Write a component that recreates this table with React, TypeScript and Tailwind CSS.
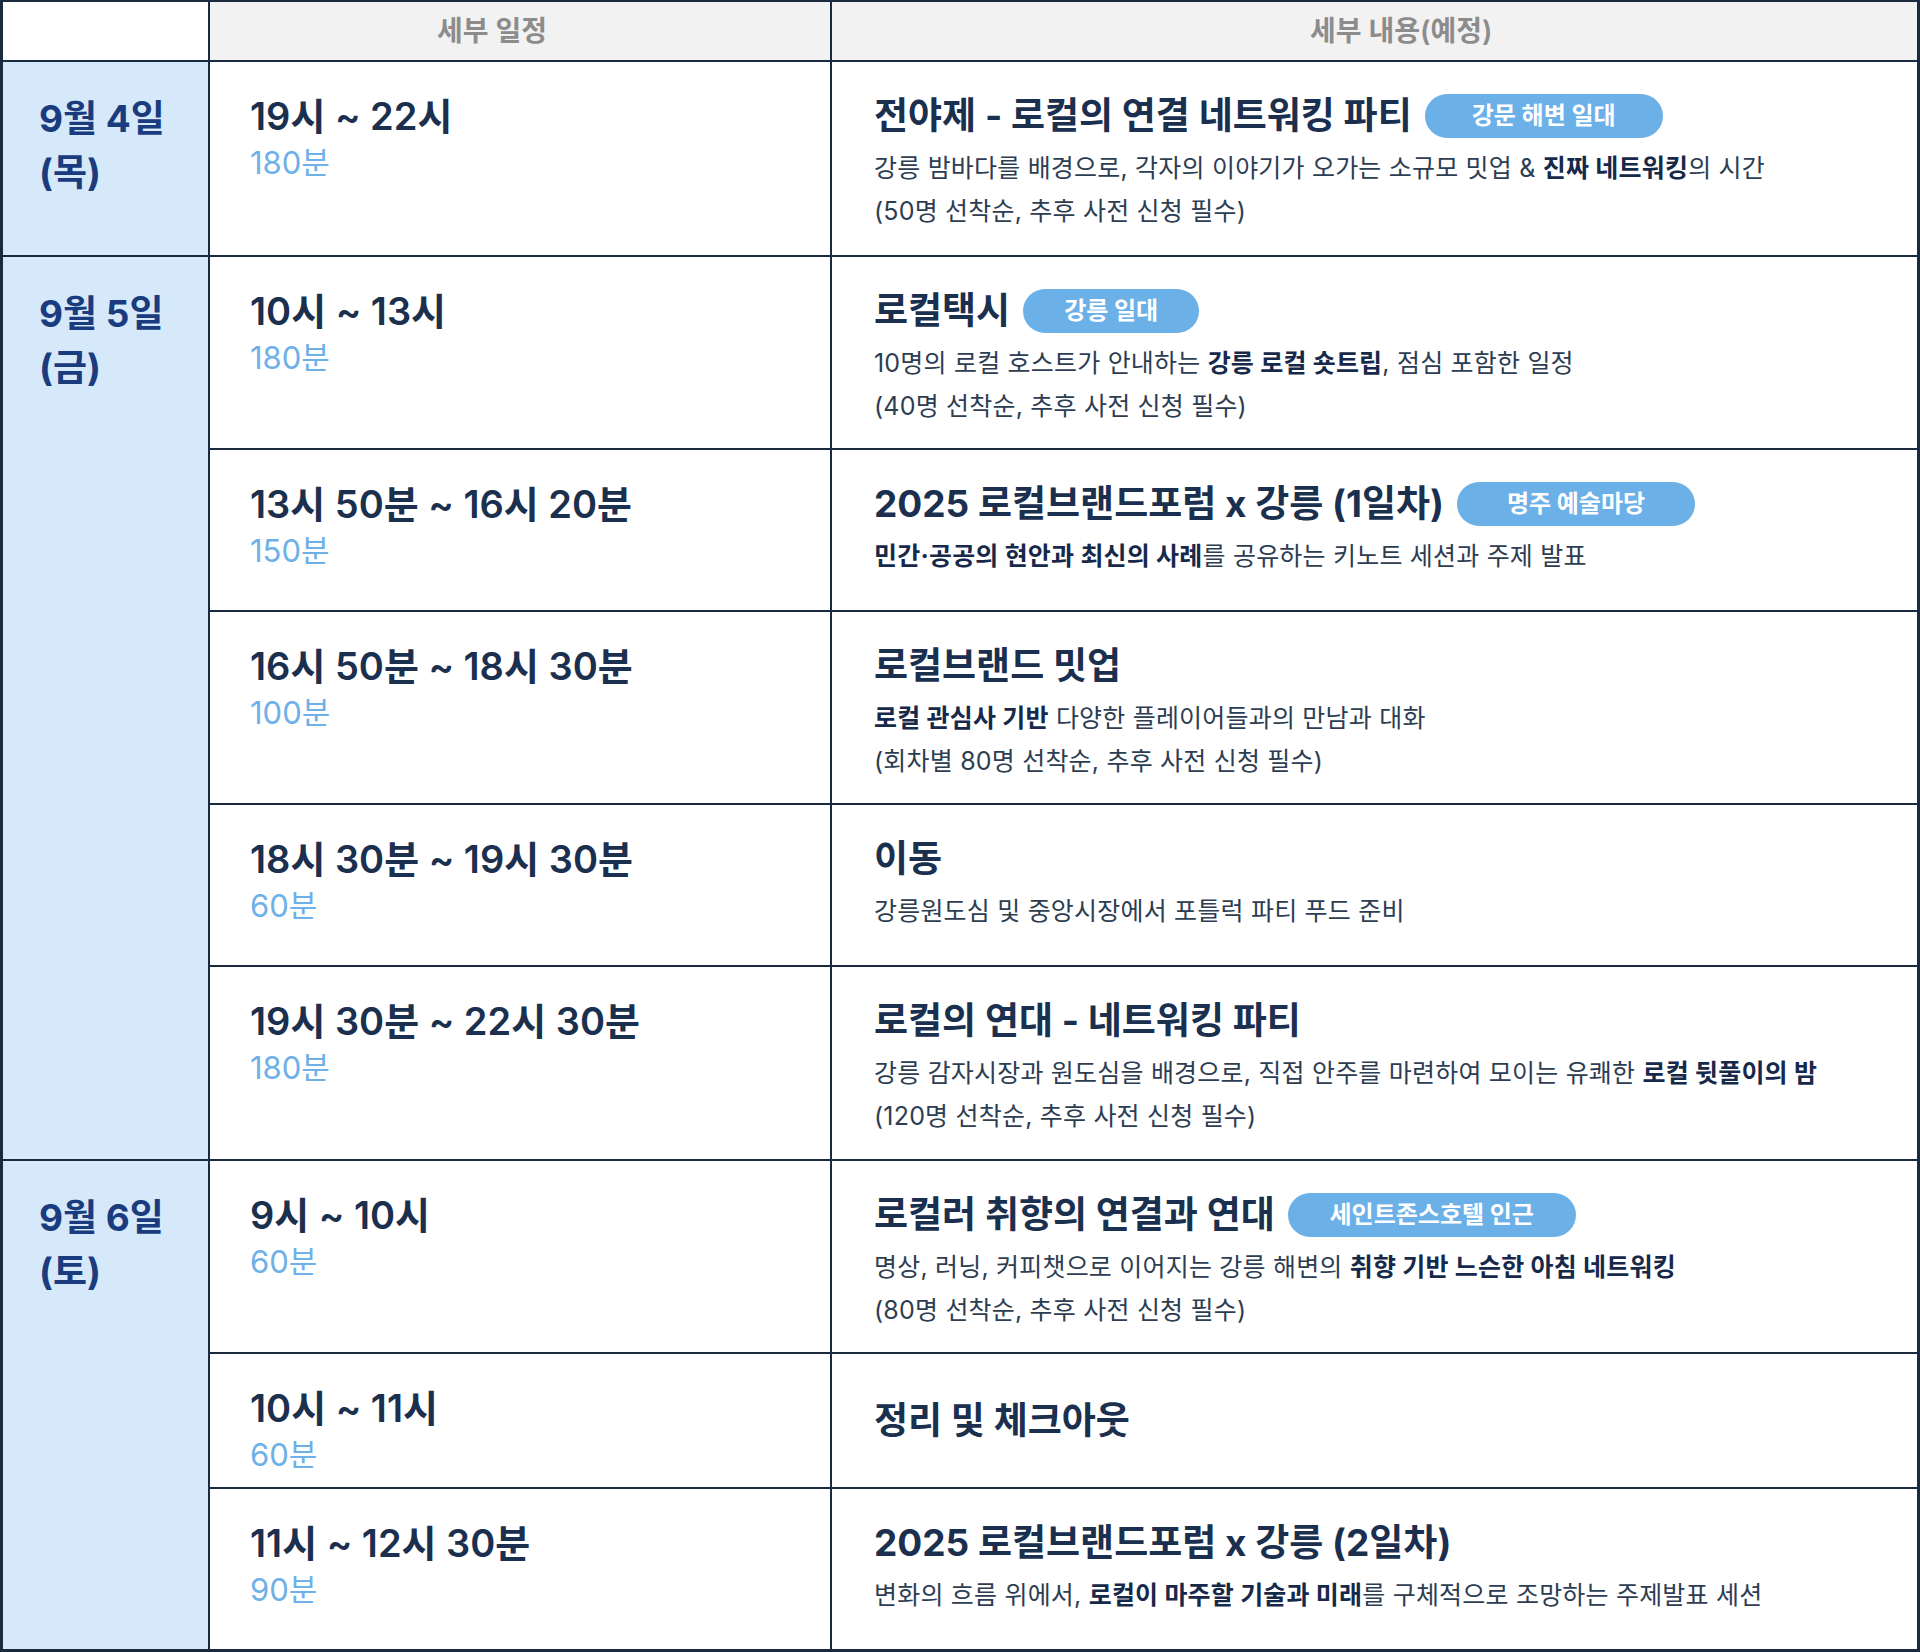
import React from "react";

type Row = {
  time: string;
  dur: string;
  title: string;
  badge?: string;
  badgeW?: string;
  desc: React.ReactNode[];
  center?: boolean;
  last?: boolean;
};

const B = ({ children }: { children: React.ReactNode }) => (
  <span className="font-bold text-[#17294a]">{children}</span>
);

const rows: Row[] = [
  {
    time: "19시 ~ 22시",
    dur: "180분",
    title: "전야제 - 로컬의 연결 네트워킹 파티",
    badge: "강문 해변 일대",
    badgeW: "w-[238px]",
    desc: [
      <>강릉 밤바다를 배경으로, 각자의 이야기가 오가는 소규모 밋업 &amp; <B>진짜 네트워킹</B>의 시간</>,
      <>(50명 선착순, 추후 사전 신청 필수)</>,
    ],
  },
  {
    time: "10시 ~ 13시",
    dur: "180분",
    title: "로컬택시",
    badge: "강릉 일대",
    badgeW: "w-[176px]",
    desc: [
      <>10명의 로컬 호스트가 안내하는 <B>강릉 로컬 숏트립</B>, 점심 포함한 일정</>,
      <>(40명 선착순, 추후 사전 신청 필수)</>,
    ],
  },
  {
    time: "13시 50분 ~ 16시 20분",
    dur: "150분",
    title: "2025 로컬브랜드포럼 x 강릉 (1일차)",
    badge: "명주 예술마당",
    badgeW: "w-[238px]",
    desc: [<><B>민간·공공의 현안과 최신의 사례</B>를 공유하는 키노트 세션과 주제 발표</>],
  },
  {
    time: "16시 50분 ~ 18시 30분",
    dur: "100분",
    title: "로컬브랜드 밋업",
    desc: [
      <><B>로컬 관심사 기반</B> 다양한 플레이어들과의 만남과 대화</>,
      <>(회차별 80명 선착순, 추후 사전 신청 필수)</>,
    ],
  },
  {
    time: "18시 30분 ~ 19시 30분",
    dur: "60분",
    title: "이동",
    desc: [<>강릉원도심 및 중앙시장에서 포틀럭 파티 푸드 준비</>],
  },
  {
    time: "19시 30분 ~ 22시 30분",
    dur: "180분",
    title: "로컬의 연대 - 네트워킹 파티",
    desc: [
      <>강릉 감자시장과 원도심을 배경으로, 직접 안주를 마련하여 모이는 유쾌한 <B>로컬 뒷풀이의 밤</B></>,
      <>(120명 선착순, 추후 사전 신청 필수)</>,
    ],
  },
  {
    time: "9시 ~ 10시",
    dur: "60분",
    title: "로컬러 취향의 연결과 연대",
    badge: "세인트존스호텔 인근",
    badgeW: "w-[288px]",
    desc: [
      <>명상, 러닝, 커피챗으로 이어지는 강릉 해변의 <B>취향 기반 느슨한 아침 네트워킹</B></>,
      <>(80명 선착순, 추후 사전 신청 필수)</>,
    ],
  },
  {
    time: "10시 ~ 11시",
    dur: "60분",
    title: "정리 및 체크아웃",
    desc: [],
    center: true,
  },
  {
    time: "11시 ~ 12시 30분",
    dur: "90분",
    title: "2025 로컬브랜드포럼 x 강릉 (2일차)",
    desc: [<>변화의 흐름 위에서, <B>로컬이 마주할 기술과 미래</B>를 구체적으로 조망하는 주제발표 세션</>],
    last: true,
  },
];

const dates: { [k: number]: { l1: string; l2: string; span: string; last?: boolean } } = {
  0: { l1: "9월 4일", l2: "(목)", span: "row-span-1" },
  1: { l1: "9월 5일", l2: "(금)", span: "row-span-5" },
  6: { l1: "9월 6일", l2: "(토)", span: "row-span-3", last: true },
};

export default function App() {
  return (
    <div className="w-[1920px] h-[1652px] bg-white font-['Inter','Noto_Sans_CJK_KR',sans-serif]">
      <div className="grid grid-cols-[210px_622px_1fr] grid-rows-[62px_195px_193px_162px_193px_162px_194px_193px_135px_163px]">
        {/* header */}
        <div className="bg-white border-t-2 border-l-[3px] border-r-2 border-b-2 border-[#1a2b40]" />
        <div className="bg-[#f2f2f2] border-t-2 border-r-2 border-b-2 border-[#1a2b40] flex items-center pl-[227px]">
          <span className="text-[28px] font-semibold text-[#8c8c8c]">세부 일정</span>
        </div>
        <div className="bg-[#f2f2f2] border-t-2 border-r-[3px] border-b-2 border-[#1a2b40] flex items-center pl-[478px]">
          <span className="text-[28px] font-semibold text-[#8c8c8c]">세부 내용(예정)</span>
        </div>

        {rows.map((r, i) => {
          const d = dates[i];
          const bb = r.last ? "border-b-[3px]" : "border-b-2";
          return (
            <React.Fragment key={i}>
              {d && (
                <div
                  className={`${d.span} col-start-1 bg-[#d5e9fb] border-l-[3px] border-r-2 ${d.last ? "border-b-[3px]" : "border-b-2"} border-[#1a2b40] pl-[36px] pt-[30px]`}
                >
                  <div className="text-[37px] leading-[54px] font-bold text-[#1a3c7e]">{d.l1}</div>
                  <div className="text-[37px] leading-[54px] font-bold text-[#1a3c7e]">{d.l2}</div>
                </div>
              )}
              <div className={`col-start-2 border-r-2 ${bb} border-[#1a2b40] pl-[40px] pt-[30px]`}>
                <div className="text-[38px] leading-[48px] font-semibold text-[#1b2f4e]">{r.time}</div>
                <div className="mt-[3px] text-[31px] leading-[40px] text-[#6eb0e8]">{r.dur}</div>
              </div>
              <div
                className={`col-start-3 border-r-[3px] ${bb} border-[#1a2b40] pl-[42px] ${r.center ? "flex items-center" : "pt-[29px]"}`}
              >
                <div>
                  <div className="flex items-center h-[50px]">
                    <span className="text-[37px] leading-[50px] font-bold text-[#1b2f4e]">{r.title}</span>
                    {r.badge && (
                      <span
                        className={`${r.badgeW} ml-[13px] h-[44px] rounded-full bg-[#6cb0e8] flex items-center justify-center text-[24px] font-bold text-white`}
                      >
                        {r.badge}
                      </span>
                    )}
                  </div>
                  {r.desc.length > 0 && (
                    <div className="mt-[6px]">
                      {r.desc.map((line, j) => (
                        <div key={j} className="text-[25px] leading-[43px] text-[#2d3d52] tracking-[0.2px]">
                          {line}
                        </div>
                      ))}
                    </div>
                  )}
                </div>
              </div>
            </React.Fragment>
          );
        })}
      </div>
    </div>
  );
}
